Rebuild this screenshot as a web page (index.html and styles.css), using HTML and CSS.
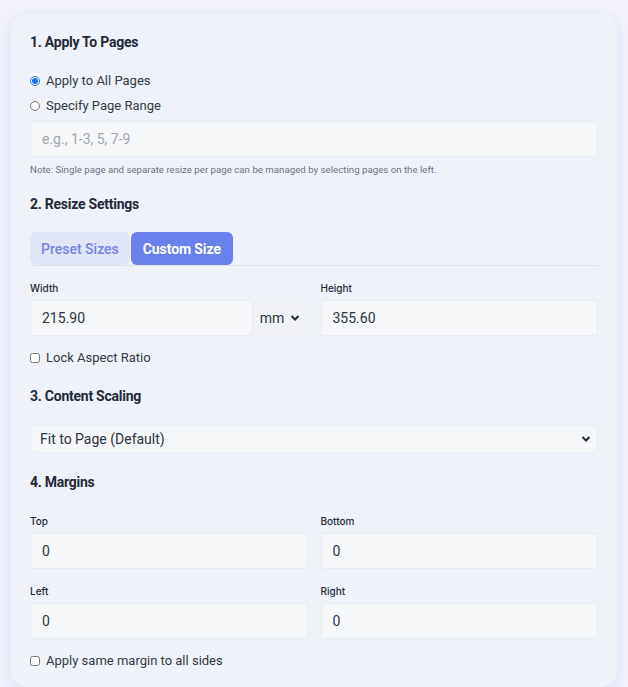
FILE: index.html
```html
<!DOCTYPE html>
<html lang="en">
<head>
<meta charset="utf-8">
<title>Resize Options</title>
<link rel="stylesheet" href="styles.css">
</head>
<body>
<div class="panel">
  <section class="group pages">
    <h3 class="group-title">1. Apply To Pages</h3>
    <div class="choices">
      <label class="choice"><input type="radio" name="scope" checked> Apply to All Pages</label>
      <label class="choice"><input type="radio" name="scope"> Specify Page Range</label>
    </div>
    <input class="field" type="text" placeholder="e.g., 1-3, 5, 7-9">
    <p class="note">Note: Single page and separate resize per page can be managed by selecting pages on the left.</p>
  </section>

  <section class="group resize">
    <h3 class="group-title">2. Resize Settings</h3>
    <div class="tabs">
      <button class="tab">Preset Sizes</button>
      <button class="tab active">Custom Size</button>
    </div>
    <div class="grid two">
      <div class="cell">
        <span class="label">Width</span>
        <div class="unit-row">
          <input class="field" type="text" value="215.90">
          <div class="unit">mm <svg width="10" height="8" viewBox="0 0 10 8"><path d="M1.5 2 5 5.5 8.5 2" fill="none" stroke="#1f2937" stroke-width="2"/></svg></div>
        </div>
      </div>
      <div class="cell">
        <span class="label">Height</span>
        <input class="field" type="text" value="355.60">
      </div>
    </div>
    <label class="choice single"><input type="checkbox"> Lock Aspect Ratio</label>
  </section>

  <section class="group scaling">
    <h3 class="group-title">3. Content Scaling</h3>
    <div class="select">Fit to Page (Default) <svg width="10" height="8" viewBox="0 0 10 8"><path d="M1.5 2 5 5.5 8.5 2" fill="none" stroke="#1f2937" stroke-width="2"/></svg></div>
  </section>

  <section class="group">
    <h3 class="group-title">4. Margins</h3>
    <div class="grid two margins">
      <div class="cell"><span class="label">Top</span><input class="field" type="text" value="0"></div>
      <div class="cell"><span class="label">Bottom</span><input class="field" type="text" value="0"></div>
      <div class="cell"><span class="label">Left</span><input class="field" type="text" value="0"></div>
      <div class="cell"><span class="label">Right</span><input class="field" type="text" value="0"></div>
    </div>
    <label class="choice single"><input type="checkbox"> Apply same margin to all sides</label>
  </section>
</div>
</body>
</html>
```
FILE: styles.css
```css
* { box-sizing: border-box; }

html, body {
  margin: 0;
  height: 100%;
}

body {
  background: #f3f4fc;
  font-family: Roboto, "Liberation Sans", sans-serif;
  color: #374151;
  padding: 14px 11px 0 11px;
  overflow: hidden;
}

.panel {
  background: #eff2f8;
  border-radius: 16px;
  padding: 19px 19px 17px 19px;
  box-shadow: 0 4px 18px rgba(120, 120, 220, 0.2);
  width: 606px;
}

.group-title {
  margin: 0;
  font-size: 14px;
  font-weight: 700;
  color: #1f2937;
  line-height: 18px;
  letter-spacing: -0.25px;
}

.group { margin-bottom: 20px; }
.group:last-child { margin-bottom: 0; }

.choices {
  display: flex;
  flex-direction: column;
  gap: 7px;
  margin-top: 21px;
  margin-bottom: 6px;
}

.choice {
  display: flex;
  align-items: center;
  gap: 6px;
  font-size: 13px;
  color: #333a44;
  line-height: 18px;
}

.choice input {
  margin: 0;
  width: 10px;
  height: 10px;
}

.choice input[type="radio"] { accent-color: #1a73e8; }

.choice.single { margin-top: 13px; }

.field {
  display: block;
  width: 100%;
  height: 36px;
  border: 1px solid #e8ebf0;
  background: #f6f7f9;
  padding: 0 11px;
  font-family: inherit;
  font-size: 14px;
  color: #2d3440;
  border-radius: 2px;
  outline: none;
}

.field::placeholder { color: #a1a6ae; }

.note {
  margin: 7px 0 0 0;
  font-size: 9.7px;
  color: #6b7280;
}

.tabs {
  display: flex;
  gap: 1px;
  margin-top: 19px;
  border-bottom: 1px solid #dde2ea;
}

.tab {
  border: none;
  font-family: inherit;
  font-size: 14px;
  height: 33px;
  border-radius: 6px;
  padding: 0 11px;
  background: #e0e6f7;
  color: #7782e6;
  font-weight: 500;
}

.tab.active {
  background: #6a80ea;
  color: #ffffff;
  font-weight: 700;
  padding: 0 12px;
  letter-spacing: -0.1px;
}

.grid.two {
  display: grid;
  grid-template-columns: 1fr 1fr;
  column-gap: 13px;
  margin-top: 16px;
}

.grid.two.margins { margin-top: 24px; row-gap: 16px; }

.label {
  display: block;
  font-family: Inter, Roboto, sans-serif;
  font-size: 10px;
  font-weight: 500;
  color: #1f2937;
  margin-bottom: 6px;
}

.unit-row { display: flex; }

.unit {
  width: 55px;
  height: 36px;
  flex: none;
  display: flex;
  align-items: center;
  justify-content: center;
  gap: 6px;
  font-size: 14px;
  color: #2d3440;
  background: #f0f2f6;
  border-radius: 0 6px 6px 0;
}

.select {
  margin-top: 20px;
  height: 28px;
  background: #f6f7f9;
  border: 1px solid #e9ecf1;
  border-radius: 6px;
  display: flex;
  align-items: center;
  justify-content: space-between;
  padding: 0 6px 0 9px;
  font-size: 14px;
  color: #2d3440;
}
```
